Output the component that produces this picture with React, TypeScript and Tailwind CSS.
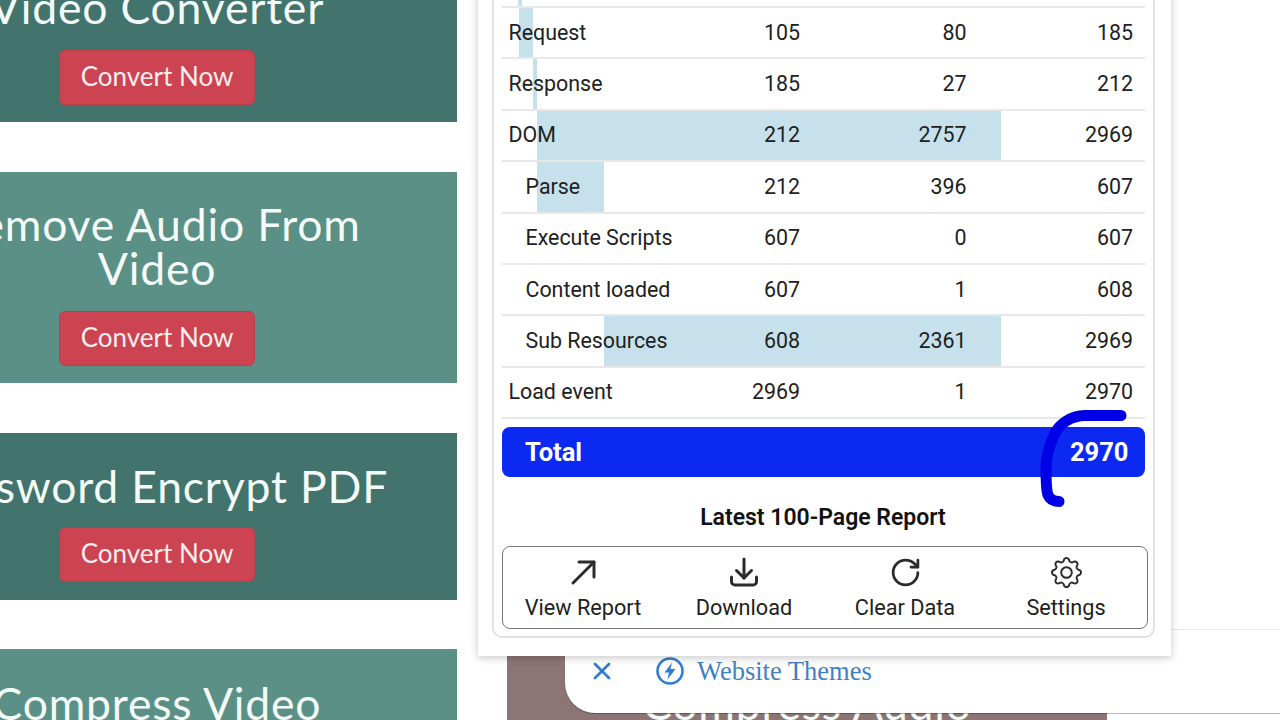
import { RotateCw, X } from "lucide-react";
import { BsGear } from "react-icons/bs";

const SCALE = 500 / 2970;

type Row = { label: string; start: number; dur: number; end: number; indent?: boolean };

const rows: Row[] = [
  { label: "Request", start: 105, dur: 80, end: 185 },
  { label: "Response", start: 185, dur: 27, end: 212 },
  { label: "DOM", start: 212, dur: 2757, end: 2969 },
  { label: "Parse", start: 212, dur: 396, end: 607, indent: true },
  { label: "Execute Scripts", start: 607, dur: 0, end: 607, indent: true },
  { label: "Content loaded", start: 607, dur: 1, end: 608, indent: true },
  { label: "Sub Resources", start: 608, dur: 2361, end: 2969, indent: true },
  { label: "Load event", start: 2969, dur: 1, end: 2970 },
];

function Bar({ start, dur }: { start: number; dur: number }) {
  if (dur < 2) return null;
  return (
    <div
      className="absolute top-0 bottom-0 bg-[#c6e1ec]"
      style={{ left: start * SCALE, width: dur * SCALE }}
    />
  );
}

function Card({
  lines,
  dark,
  className,
  btnClass,
}: {
  lines: string[];
  dark?: boolean;
  className: string;
  btnClass: string;
}) {
  return (
    <div
      className={`w-[600px] shrink-0 flex flex-col items-center ${dark ? "bg-[#42736d]" : "bg-[#5a9085]"} ${className}`}
    >
      {lines.map((l) => (
        <div
          key={l}
          className="h-[44px] leading-[44px] text-[44.5px] text-[#f3fbf8] whitespace-nowrap font-['Lato',sans-serif] font-normal tracking-[0.8px]"
        >
          {l}
        </div>
      ))}
      <button
        className={`w-[196px] h-[55px] pb-[2px] rounded-[6px] bg-[#cc4452] border border-[#bd3d4b] text-[26px] text-[#fbeeee] font-['Lato',sans-serif] ${btnClass}`}
      >
        Convert Now
      </button>
    </div>
  );
}

function ActionButton({ icon, label }: { icon: React.ReactNode; label: string }) {
  return (
    <div className="flex flex-col items-center">
      <div className="h-[32px] w-[34px] flex items-center justify-center text-[#2b2b2b]">{icon}</div>
      <div className="mt-[7px] text-[21.7px] leading-[26px] text-[#212121] whitespace-nowrap">{label}</div>
    </div>
  );
}

export default function App() {
  return (
    <div className="relative w-[1280px] h-[720px] overflow-hidden bg-white flex font-['Roboto',sans-serif]">
      {/* left column of tool cards */}
      <div className="shrink-0 ml-[-143px] mt-[-45px] flex flex-col gap-[50px]">
        <Card dark lines={["Video Converter"]} className="pt-[30px] pb-[17px]" btnClass="mt-[21px]" />
        <Card lines={["Remove Audio From", "Video"]} className="pt-[30px] pb-[17px]" btnClass="mt-[21px]" />
        <Card dark lines={["Password Encrypt PDF"]} className="pt-[31px] pb-[18px]" btnClass="mt-[19px]" />
        <Card lines={["Compress Video"]} className="-mt-px pt-8 pb-[18px]" btnClass="mt-[19px]" />
      </div>
      {/* right column, mostly covered */}
      <div className="shrink-0 ml-[50px] mt-[649px]">
        <Card lines={["Compress Audio"]} className="bg-[#8d7575]! pt-8 pb-[18px]" btnClass="mt-[19px]" />
      </div>

      {/* bottom ad */}
      <div className="absolute left-[565px] right-0 top-[629px] h-[84px] bg-white border-t border-[#e8e8e8] rounded-bl-[30px] shadow-[0_1px_1px_rgba(0,0,0,0.3)] flex items-center pl-[23px] pb-[1px]">
        <X size={28} strokeWidth={2.4} className="text-[#2f7dd1]" />
        <svg width="30" height="30" viewBox="0 0 30 30" className="ml-[39px]">
          <circle cx="15" cy="15" r="12.5" fill="none" stroke="#2f7dd1" strokeWidth="2.6" />
          <path d="M17 6.5 L9.5 16.5 H14 L12.5 23.5 L20.5 13 H15.5 Z" fill="#2f7dd1" />
        </svg>
        <span className="ml-[12px] text-[26.5px] leading-[30px] text-[#3f80c6] font-['Liberation_Serif',serif] whitespace-nowrap">
          Website Themes
        </span>
      </div>

      {/* report popup */}
      <div className="absolute left-[478px] top-[-40px] w-[693px] bg-white pl-[14px] pr-[16px] pt-[14px] pb-[18px] shadow-[0_2px_8px_rgba(0,0,0,0.22)]">
        <div className="border-2 border-[#e2e2e2] rounded-[10px] pl-[7.5px] pr-[7px] pt-[8px] pb-[7px]">
          <div className="relative h-[24px] w-[643px] border-b-2 border-[#e8e8e8]">
            <Bar start={100} dur={20} />
          </div>
          {rows.map((r) => (
            <div
              key={r.label}
              className="relative h-[51.4px] w-[643px] border-b-2 border-[#e8e8e8] text-[21.4px] text-[#212121]"
            >
              <Bar start={r.start} dur={r.dur} />
              <div className="relative h-full grid grid-cols-[minmax(0,1fr)_166.5px_166.5px_166.5px] items-center pl-[7px] pr-[11.5px] text-right">
                <span className={`text-left whitespace-nowrap ${r.indent ? "pl-[17px]" : ""}`}>{r.label}</span>
                <span>{r.start}</span>
                <span>{r.dur}</span>
                <span>{r.end}</span>
              </div>
            </div>
          ))}
          <div className="mt-[8px] w-[643px] h-[50px] rounded-[8px] bg-[#0b29f0] flex items-center justify-between pl-[23.5px] pr-[16px] text-white font-bold text-[25.5px]">
            <span>Total</span>
            <span>2970</span>
          </div>
          <div className="h-[69px] pt-[13px] flex items-center justify-center w-[643px] text-[23px] font-semibold text-[#111]">
            Latest 100-Page Report
          </div>
          <div className="w-[646.5px] h-[83px] border-[1.5px] border-[#777] rounded-[8px] grid grid-cols-4 pt-[9px] pr-[0.5px]">
            <ActionButton
              label="View Report"
              icon={
                <svg width="32" height="32" viewBox="0 0 32 32" fill="none" stroke="currentColor" strokeWidth="3" strokeLinecap="round" strokeLinejoin="round">
                  <path d="M12 6H27V21" />
                  <path d="M27 6L6 27" />
                </svg>
              }
            />
            <ActionButton
              label="Download"
              icon={
                <svg width="32" height="32" viewBox="0 0 32 32" fill="none" stroke="currentColor" strokeWidth="3" strokeLinecap="round" strokeLinejoin="round">
                  <path d="M16 3V22" />
                  <path d="M8.5 14.5L16 22L23.5 14.5" />
                  <path d="M3.5 21V25.5A3.5 3.5 0 0 0 7 29H25A3.5 3.5 0 0 0 28.5 25.5V21" />
                </svg>
              }
            />
            <ActionButton label="Clear Data" icon={<RotateCw size={33} strokeWidth={2} />} />
            <ActionButton label="Settings" icon={<BsGear size={31} />} />
          </div>
        </div>
      </div>

      {/* hand-drawn pen mark */}
      <svg className="absolute left-0 top-0 pointer-events-none" width="1280" height="720" fill="none">
        <path
          d="M1121 415.5 L1085 415.5 C1070 416 1060 424 1055 433 C1050 445 1046 455 1046 467 C1046 480 1046 490 1048 495 C1050 500 1054 501.5 1059 501.5"
          stroke="#0000e6"
          strokeWidth="11"
          strokeLinecap="round"
          strokeLinejoin="round"
        />
      </svg>
    </div>
  );
}
